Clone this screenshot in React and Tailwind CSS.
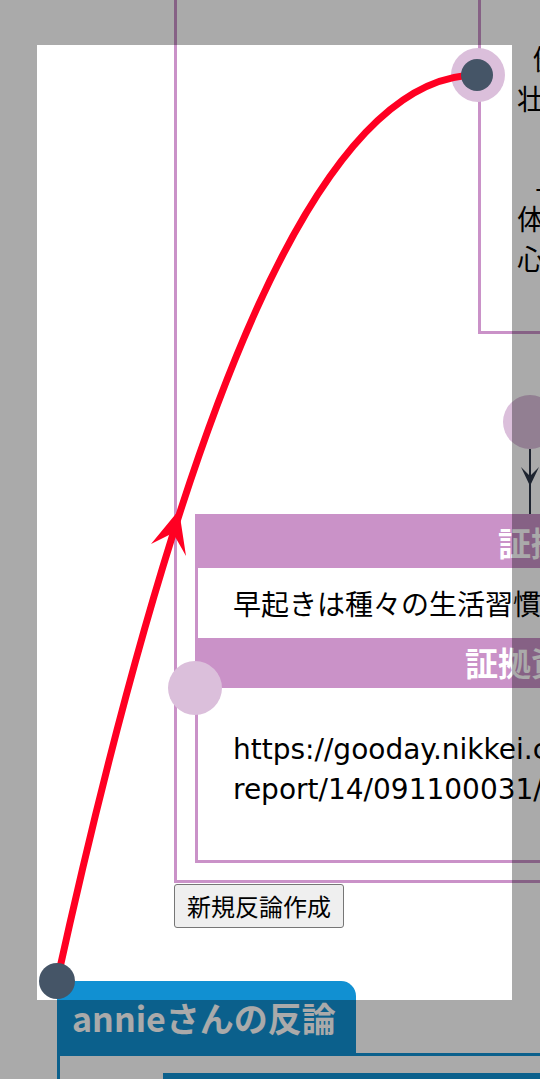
export default function App() {
  return (
    <div className="relative w-[540px] h-[1079px] overflow-hidden bg-white text-black font-['Noto_Sans_CJK_JP','Noto_Sans',sans-serif]">
      <div className="flex w-[540px] flex-col items-start">
        {/* purple outer container */}
        <div className="ml-[174px] w-[900px] shrink-0 border-b-[3px] border-l-[3px] border-[#ca92c8] pb-[17px]">
          {/* top-right card */}
          <div className="relative ml-[301px] w-[560px] whitespace-nowrap border-b-[3px] border-l-[3px] border-[#ca92c8] pb-[53px] pl-[36px] pt-[38px] text-[28px] leading-[40px]">
            <p className="indent-[16px]">健康的な生活習慣を身につけることで、老年期まで</p>
            <p>壮健な体を保つことができる。</p>
            <p>&nbsp;</p>
            <p className="indent-[18px]">上記の理由から、早起きは</p>
            <p>体にとって良い習慣であり、</p>
            <p>心の健康にも良い影響を与える。</p>
            <span className="absolute -left-[30px] top-[48px] h-[54px] w-[54px] rounded-full bg-[#dbbfdb]" />
          </div>

          {/* connector */}
          <div className="ml-[326px] mt-[61px] h-[54px] w-[54px] rounded-full bg-[#dbbfdb]" />
          <svg className="ml-[343px] block" width="20" height="65" viewBox="0 0 20 65">
            <line x1="10" y1="0" x2="10" y2="65" stroke="#2d3748" strokeWidth="2" />
            <polygon points="1,18 10,37 19,18 10,27" fill="#2d3748" />
          </svg>

          {/* evidence box */}
          <div className="relative ml-[18px] w-[672px] border-[3px] border-[#ca92c8]">
            <div className="flex h-[51px] items-center justify-center bg-[#ca92c8] text-[33px] font-bold text-white">
              証拠
            </div>
            <div className="flex h-[70px] items-center whitespace-nowrap pl-[35px] text-[28px]">
              早起きは種々の生活習慣病のリスクを下げる
            </div>
            <div className="flex h-[50px] items-center justify-center bg-[#ca92c8] text-[33px] font-bold text-white">
              証拠資料
            </div>
            <div className="h-[172px] whitespace-nowrap pl-[35px] pt-[42px] font-['DejaVu_Sans',sans-serif] text-[28px] leading-[40px]">
              <p>https://gooday.nikkei.co.jp/atcl/</p>
              <p>report/14/091100031/</p>
            </div>
            <span className="absolute -left-[30px] top-[144px] h-[54px] w-[54px] rounded-full bg-[#dbbfdb]" />
          </div>
        </div>

        <button className="ml-[174px] mt-[1px] h-[44px] rounded-[3px] border border-[#767676] bg-[#efefef] px-[12px] text-[24px] leading-none text-black">
          新規反論作成
        </button>

        {/* blue section */}
        <div className="ml-[57px] mt-[53px] flex h-[72px] w-[299px] items-center whitespace-nowrap rounded-t-[15px] bg-[#1190d2] pl-[15px] text-[34px] font-bold text-white">
          annieさんの反論
        </div>
        <div className="ml-[57px] h-[200px] w-[600px] shrink-0 border-l-[3px] border-t-[3px] border-[#1190d2]">
          <div className="ml-[103px] mt-[17px] h-[20px] bg-[#1190d2]" />
        </div>
      </div>

      {/* spotlight overlay */}
      <div className="pointer-events-none absolute left-[37px] top-[45px] h-[955px] w-[475px] shadow-[0_0_0_1200px_rgba(0,0,0,0.333)]" />

      {/* tour arrow */}
      <svg className="pointer-events-none absolute left-0 top-0" width="540" height="1079" viewBox="0 0 540 1079">
        <path d="M57 981 C185 400 320 75 477 75" fill="none" stroke="#ff0022" strokeWidth="7" />
        <polygon points="179,510 151,544 173,533 186,556" fill="#ff0022" />
        <circle cx="477" cy="75" r="16" fill="#455567" />
        <circle cx="57" cy="981" r="18" fill="#455567" />
      </svg>
    </div>
  );
}
